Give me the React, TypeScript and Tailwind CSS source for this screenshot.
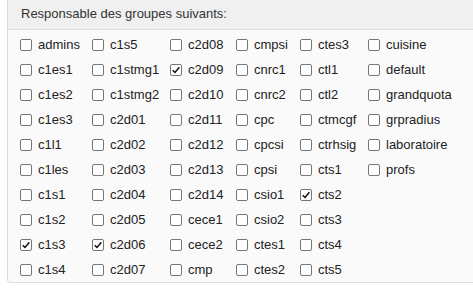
const columns: [string, boolean][][] = [
  [["admins", false], ["c1es1", false], ["c1es2", false], ["c1es3", false], ["c1l1", false], ["c1les", false], ["c1s1", false], ["c1s2", false], ["c1s3", true], ["c1s4", false]],
  [["c1s5", false], ["c1stmg1", false], ["c1stmg2", false], ["c2d01", false], ["c2d02", false], ["c2d03", false], ["c2d04", false], ["c2d05", false], ["c2d06", true], ["c2d07", false]],
  [["c2d08", false], ["c2d09", true], ["c2d10", false], ["c2d11", false], ["c2d12", false], ["c2d13", false], ["c2d14", false], ["cece1", false], ["cece2", false], ["cmp", false]],
  [["cmpsi", false], ["cnrc1", false], ["cnrc2", false], ["cpc", false], ["cpcsi", false], ["cpsi", false], ["csio1", false], ["csio2", false], ["ctes1", false], ["ctes2", false]],
  [["ctes3", false], ["ctl1", false], ["ctl2", false], ["ctmcgf", false], ["ctrhsig", false], ["cts1", false], ["cts2", true], ["cts3", false], ["cts4", false], ["cts5", false]],
  [["cuisine", false], ["default", false], ["grandquota", false], ["grpradius", false], ["laboratoire", false], ["profs", false]],
];

const widths = ["w-[72px]", "w-[78px]", "w-[66px]", "w-[64px]", "w-[68px]", "w-[100px]"];

function Box({ checked }: { checked: boolean }) {
  return (
    <span className="flex h-[12px] w-[12px] shrink-0 items-center justify-center rounded-[2px] border border-[#767676] bg-white">
      {checked && (
        <svg viewBox="0 0 12 12" className="h-[10px] w-[10px]">
          <path d="M2 6.2 L4.8 9 L10 2.6" fill="none" stroke="#111" strokeWidth="1.8" />
        </svg>
      )}
    </span>
  );
}

export default function App() {
  return (
    <div className="min-h-[295px] bg-white pl-[7px] font-['Liberation_Sans',Arial,sans-serif] text-[13px]">
      <div className="rounded-bl-[4px] border-b border-l border-[#dddddd] bg-[#fafafa]">
        <div className="flex h-[30px] items-center border-b border-[#dddddd] bg-[#f0f0f0] pl-[13px] pb-[1px] text-[#333]">
          Responsable des groupes suivants:
        </div>
        <div className="flex pl-[12px] pt-[2px]">
          {columns.map((col, i) => (
            <div key={i} className={`flex flex-col ${widths[i]}`}>
              {col.map(([name, checked]) => (
                <label key={name} className="flex h-[25px] items-center gap-[6px] text-[#222]">
                  <Box checked={checked} />
                  <span>{name}</span>
                </label>
              ))}
            </div>
          ))}
        </div>
      </div>
    </div>
  );
}
